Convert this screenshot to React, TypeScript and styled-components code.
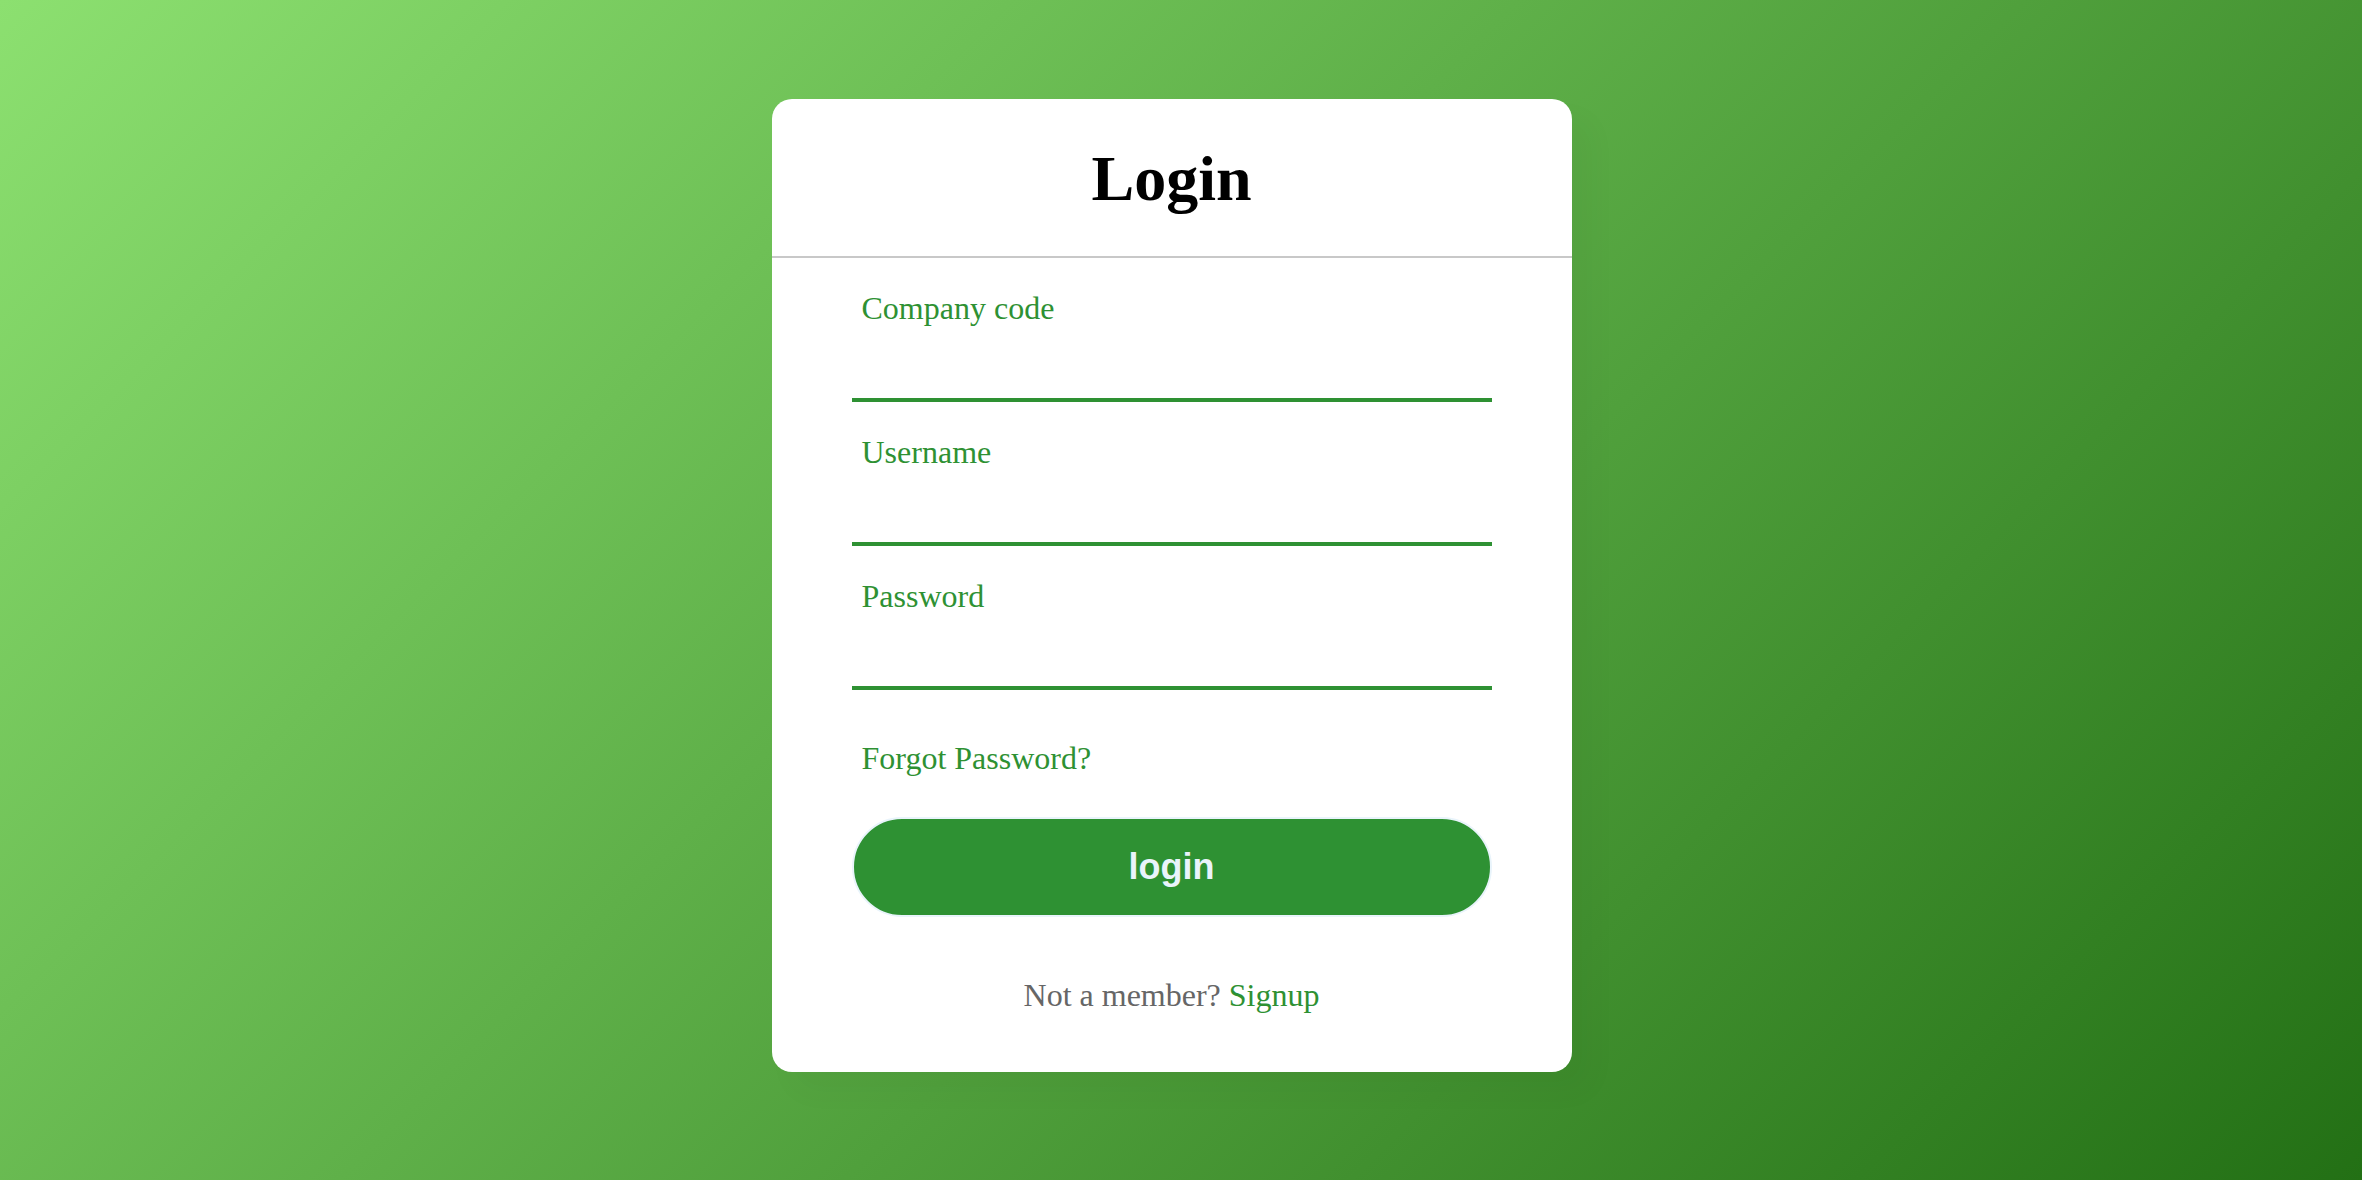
import React from "react";
import styled, { createGlobalStyle } from "styled-components";

const GREEN = "#2e9133";

const GlobalStyle = createGlobalStyle`
  html, body {
    margin: 0;
    padding: 0;
  }
  body {
    min-height: 100vh;
    background: linear-gradient(135deg, #8ce070 0%, #237015 100%);
    background-attachment: fixed;
    font-family: "Liberation Serif", "Times New Roman", serif;
  }
  * {
    box-sizing: border-box;
  }
`;

const Page = styled.div`
  display: flex;
  justify-content: center;
  align-items: flex-start;
  min-height: 1180px;
  padding: 99px 19px 0 0;
`;

const Card = styled.div`
  width: 800px;
  background: #ffffff;
  border-radius: 20px;
  box-shadow: 20px 20px 30px rgba(0, 0, 0, 0.03);
`;

const Title = styled.h1`
  margin: 0;
  padding: 43px 0 40px;
  font-family: "Liberation Serif", "Times New Roman", serif;
  font-size: 64px;
  line-height: 74px;
  font-weight: 700;
  color: #000000;
  text-align: center;
  border-bottom: 2px solid #c8c8c8;
`;

const Form = styled.form`
  display: block;
  padding: 60px 80px 58px;
`;

const Field = styled.div`
  display: flex;
  flex-direction: column;
  height: 84px;
  margin-bottom: 60px;
  border-bottom: 4px solid ${GREEN};
`;

const Label = styled.label`
  margin: -28.4px 0 0 10px;
  font-size: 32px;
  line-height: 36.8px;
  color: ${GREEN};
`;

const Input = styled.input`
  flex: 1;
  width: 100%;
  padding: 0 10px;
  border: none;
  outline: none;
  background: none;
  font-family: "Liberation Serif", "Times New Roman", serif;
  font-size: 32px;
  color: #000;
`;

const Forgot = styled.div`
  margin: -10px 0 40px 10px;
  font-size: 32px;
  line-height: 36.8px;
  color: ${GREEN};
  cursor: pointer;
`;

const SubmitButton = styled.button`
  display: block;
  width: 100%;
  height: 100px;
  border: 2px solid #e9f4fb;
  border-radius: 50px;
  background: ${GREEN};
  color: #e9f4fb;
  font-family: "Liberation Sans", Arial, sans-serif;
  font-size: 36px;
  font-weight: 700;
  cursor: pointer;
  outline: none;
`;

const SignupLine = styled.div`
  margin: 60px 0 0;
  text-align: center;
  font-size: 32px;
  line-height: 36.8px;
  color: #666666;
`;

const SignupLink = styled.a`
  color: ${GREEN};
  text-decoration: none;
`;

const fields = [
  { id: "company", label: "Company code", type: "text" },
  { id: "username", label: "Username", type: "text" },
  { id: "password", label: "Password", type: "password" },
];

export default function App() {
  return (
    <>
      <GlobalStyle />
      <Page>
        <Card>
          <Title>Login</Title>
          <Form onSubmit={(e) => e.preventDefault()}>
            {fields.map((f) => (
              <Field key={f.id}>
                <Label htmlFor={f.id}>{f.label}</Label>
                <Input id={f.id} type={f.type} />
              </Field>
            ))}
            <Forgot>Forgot Password?</Forgot>
            <SubmitButton type="submit">login</SubmitButton>
            <SignupLine>
              Not a member? <SignupLink href="#">Signup</SignupLink>
            </SignupLine>
          </Form>
        </Card>
      </Page>
    </>
  );
}
